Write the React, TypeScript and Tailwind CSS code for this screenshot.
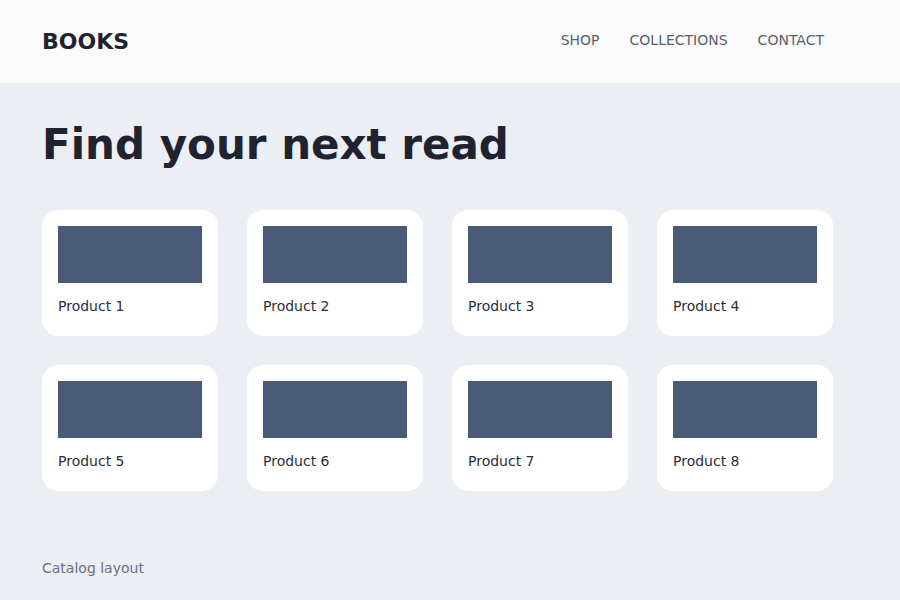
import React from 'react';

const products = ['Product 1', 'Product 2', 'Product 3', 'Product 4', 'Product 5', 'Product 6', 'Product 7', 'Product 8'];
const links = ['SHOP', 'COLLECTIONS', 'CONTACT'];

export default function App() {
  return (
    <div className="min-h-[600px] w-[900px] bg-[#ebeef3] font-['DejaVu_Sans',sans-serif] flex flex-col">
      <header className="h-[83px] bg-[#fafafa] flex items-center pl-[42px] pr-[76px]">
        <div className="text-[22px] font-bold text-[#1f2330]">BOOKS</div>
        <nav className="ml-auto flex gap-[30px] text-[14px] text-[#5a5f6b] -mt-[3px]">
          {links.map(l => (
            <span key={l}>{l}</span>
          ))}
        </nav>
      </header>

      <main className="px-[42px] flex-1 flex flex-col">
        <h1 className="mt-[38px] text-[42px] leading-[48px] font-bold text-[#1f2330]">Find your next read</h1>
        <div className="mt-[41px] grid grid-cols-[repeat(4,176px)] gap-[29px]">
          {products.map(p => (
            <div key={p} className="h-[126px] bg-white rounded-[16px] p-[16px]">
              <div className="h-[57px] bg-[#4a5b78]" />
              <div className="mt-[13px] text-[14px] leading-[20px] text-[#2a2e38]">{p}</div>
            </div>
          ))}
        </div>
        <div className="mt-auto mb-[21px] text-[14px] text-[#6b7080]">Catalog layout</div>
      </main>
    </div>
  );
}
